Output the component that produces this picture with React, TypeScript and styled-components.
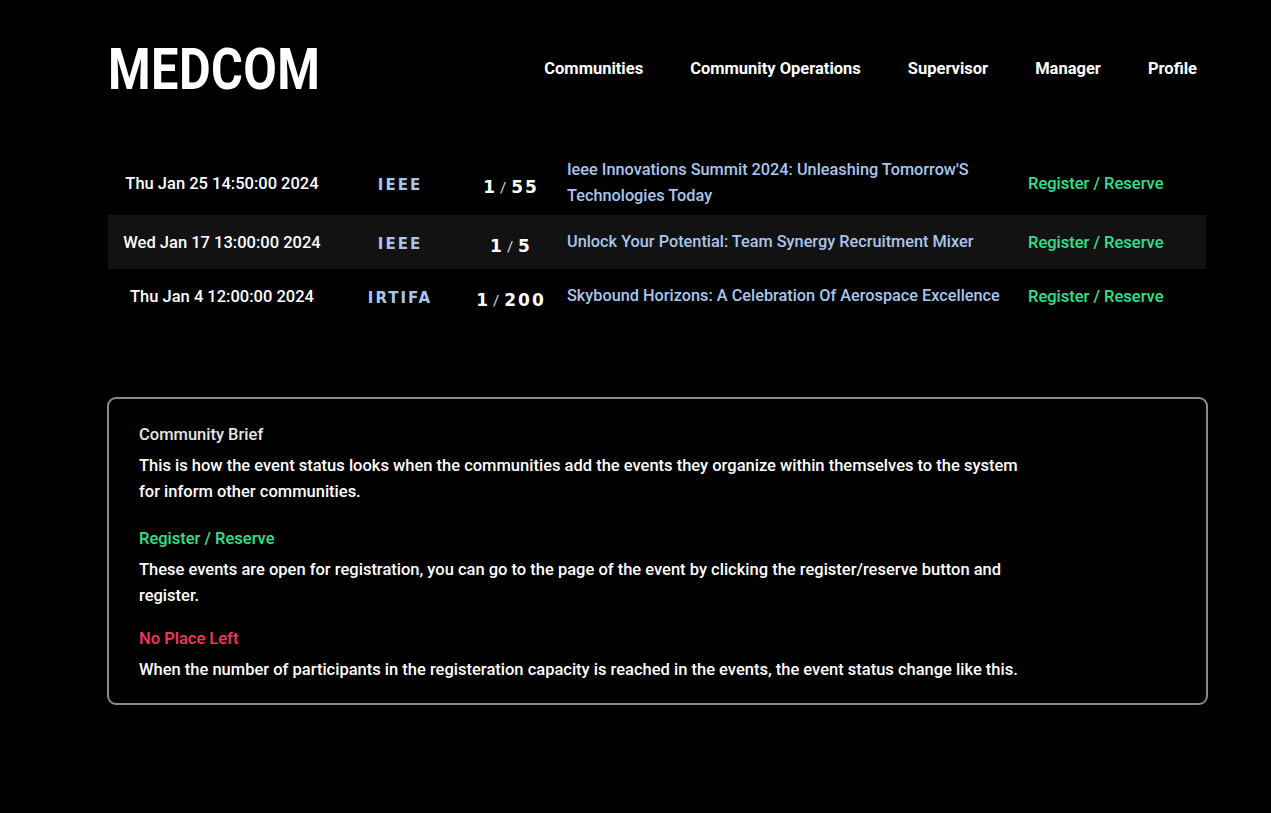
import React from "react";
import styled, { createGlobalStyle } from "styled-components";

const GlobalStyle = createGlobalStyle`
  html, body {
    margin: 0;
    padding: 0;
    background: #000;
  }
  body {
    font-family: Roboto, "Liberation Sans", sans-serif;
    color: #fff;
  }
  * { box-sizing: border-box; }
`;

const Page = styled.div`
  min-height: 813px;
  background: #000;
  padding-left: 108px;
`;

const Container = styled.div`
  width: 1098px;
`;

const Header = styled.header`
  height: 136px;
  display: flex;
  align-items: center;
  justify-content: space-between;
`;

const Logo = styled.div`
  font-family: Roboto, "Liberation Sans", sans-serif;
  font-weight: 700;
  font-size: 58px;
  line-height: 1;
  letter-spacing: 0.5px;
  color: #fff;
  transform: scaleX(0.84);
  transform-origin: left center;
  margin-top: 2px;
`;

const Nav = styled.nav`
  display: flex;
  align-items: center;
  gap: 47px;
  padding-right: 9px;
`;

const NavLink = styled.a`
  font-family: Roboto, "Liberation Sans", sans-serif;
  font-weight: 700;
  font-size: 16.5px;
  color: #fff;
  text-decoration: none;
`;

const Table = styled.div`
  margin-top: 15px;
  display: flex;
  flex-direction: column;
`;

const Row = styled.div<{ $striped?: boolean }>`
  display: grid;
  grid-template-columns: 228px 128px 94px 462px 1fr;
  align-items: center;
  min-height: 54px;
  padding: 6px 0;
  background: ${(p) => (p.$striped ? "#121212" : "transparent")};
`;

const DateCell = styled.div`
  text-align: center;
  font-weight: 500;
  font-size: 16.5px;
  color: #fff;
`;

const CommunityCell = styled.div`
  text-align: center;
  font-family: "DejaVu Sans", sans-serif;
  font-weight: 700;
  font-size: 15px;
  letter-spacing: 2px;
  color: #a9c6ec;
  padding-top: 3px;
`;

const CountCell = styled.div`
  text-align: center;
  font-family: "DejaVu Sans", sans-serif;
  font-weight: 700;
  font-size: 17px;
  letter-spacing: 2px;
  color: #fff;
  padding-top: 7px;
`;

const Slash = styled.span`
  font-family: Roboto, sans-serif;
  font-weight: 400;
  font-size: 15px;
  color: #ddd;
  margin: 0 5px 0 3px;
  letter-spacing: 0;
`;

const TitleCell = styled.div`
  padding: 0 9px;
  font-weight: 500;
  font-size: 16.3px;
  line-height: 26px;
  color: #a9c6ec;
`;

const StatusCell = styled.div<{ $full?: boolean }>`
  padding-left: 8px;
  font-weight: 500;
  font-size: 16.5px;
  color: ${(p) => (p.$full ? "#ff3557" : "#2fe08a")};
`;

const Brief = styled.section`
  margin-top: 74px;
  margin-left: -1px;
  width: 1101px;
  border: 2px solid #8a8a8a;
  border-radius: 9px;
  padding: 23px 30px 20px 30px;
`;

const BriefHeading = styled.div<{ $color?: string; $gap?: number }>`
  font-weight: 500;
  font-size: 16.5px;
  line-height: 26px;
  color: ${(p) => p.$color || "#e6e6e6"};
  margin-top: ${(p) => p.$gap || 0}px;
`;

const BriefText = styled.p`
  margin: 5px 0 0 0;
  max-width: 884px;
  font-weight: 500;
  font-size: 16.5px;
  line-height: 26px;
  color: #fff;
`;

type EventRow = {
  date: string;
  community: string;
  count: number;
  capacity: number;
  title: string;
};

const events: EventRow[] = [
  {
    date: "Thu Jan 25 14:50:00 2024",
    community: "IEEE",
    count: 1,
    capacity: 55,
    title: "Ieee Innovations Summit 2024: Unleashing Tomorrow'S Technologies Today",
  },
  {
    date: "Wed Jan 17 13:00:00 2024",
    community: "IEEE",
    count: 1,
    capacity: 5,
    title: "Unlock Your Potential: Team Synergy Recruitment Mixer",
  },
  {
    date: "Thu Jan 4 12:00:00 2024",
    community: "IRTIFA",
    count: 1,
    capacity: 200,
    title: "Skybound Horizons: A Celebration Of Aerospace Excellence",
  },
];

export default function App() {
  return (
    <>
      <GlobalStyle />
      <Page>
        <Container>
          <Header>
            <Logo>MEDCOM</Logo>
            <Nav>
              <NavLink href="#">Communities</NavLink>
              <NavLink href="#">Community Operations</NavLink>
              <NavLink href="#">Supervisor</NavLink>
              <NavLink href="#">Manager</NavLink>
              <NavLink href="#">Profile</NavLink>
            </Nav>
          </Header>

          <Table>
            {events.map((e, i) => (
              <Row key={i} $striped={i % 2 === 1}>
                <DateCell>{e.date}</DateCell>
                <CommunityCell>{e.community}</CommunityCell>
                <CountCell>
                  {e.count}
                  <Slash>/</Slash>
                  {e.capacity}
                </CountCell>
                <TitleCell>{e.title}</TitleCell>
                <StatusCell $full={e.count >= e.capacity}>Register / Reserve</StatusCell>
              </Row>
            ))}
          </Table>

          <Brief>
            <BriefHeading>Community Brief</BriefHeading>
            <BriefText>
              This is how the event status looks when the communities add the events they organize
              within themselves to the system for inform other communities.
            </BriefText>
            <BriefHeading $color="#2fe08a" $gap={21}>
              Register / Reserve
            </BriefHeading>
            <BriefText>
              These events are open for registration, you can go to the page of the event by clicking
              the register/reserve button and register.
            </BriefText>
            <BriefHeading $color="#ff3557" $gap={17}>
              No Place Left
            </BriefHeading>
            <BriefText>
              When the number of participants in the registeration capacity is reached in the events,
              the event status change like this.
            </BriefText>
          </Brief>
        </Container>
      </Page>
    </>
  );
}
